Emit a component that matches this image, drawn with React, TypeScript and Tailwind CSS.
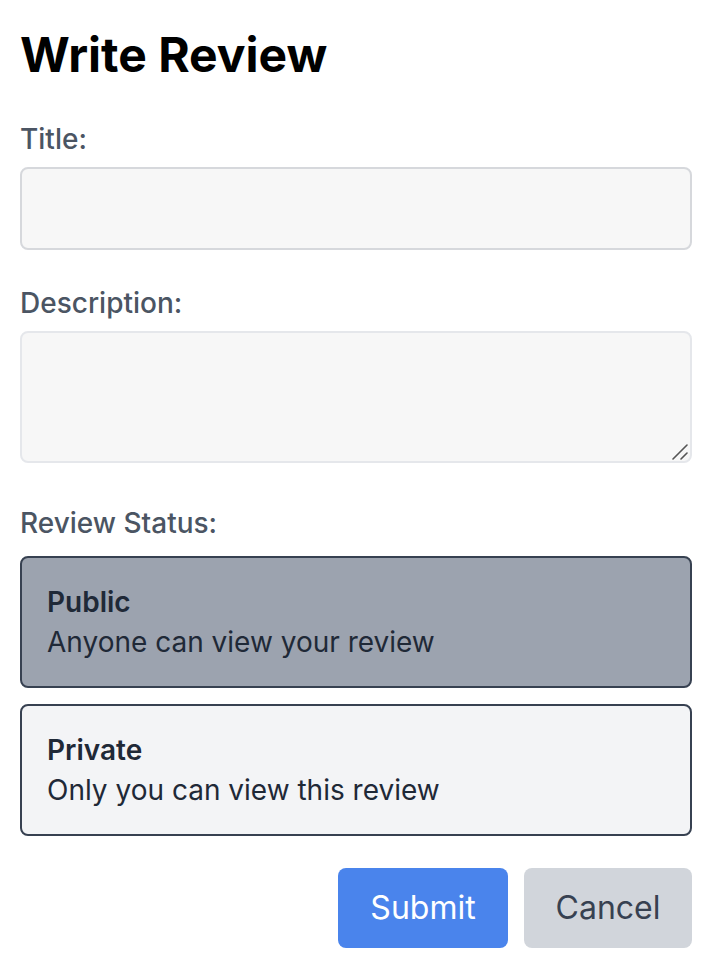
import { useState } from 'react'
import clsx from 'clsx'

const STATUS_OPTIONS = [
  { id: 'public', label: 'Public', hint: 'Anyone can view your review' },
  { id: 'private', label: 'Private', hint: 'Only you can view this review' },
]

export default function App() {
  const [status, setStatus] = useState('public')

  return (
    <div className="min-h-screen bg-white pl-[20px] pr-[24px] pt-[23px] font-['Inter',sans-serif]">
      <h1 className="text-[48px] leading-[64px] font-bold text-black">Write Review</h1>

      <form className="mt-[32px]" onSubmit={(e) => e.preventDefault()}>
        {/* Title */}
        <label className="block text-[28px] leading-[40px] font-medium text-[#4b5563] mb-[8px]">
          Title:
        </label>
        <input
          type="text"
          className="block w-full h-[83px] rounded-[8px] border-2 border-[#d6d8dc] bg-[#f7f7f7] px-[16px] text-[32px] outline-none"
        />

        {/* Description */}
        <label className="block mt-[33px] text-[28px] leading-[40px] font-medium text-[#4b5563] mb-[8px]">
          Description:
        </label>
        <div className="relative">
          <textarea className="block w-full h-[132px] resize-none rounded-[8px] border-2 border-[#e5e7eb] bg-[#f7f7f7] px-[16px] text-[32px] outline-none" />
          <svg
            className="pointer-events-none absolute right-[3px] bottom-[3px]"
            width="18"
            height="18"
            viewBox="0 0 18 18"
          >
            <path d="M2 17 L16 3 M10 17 L16 11" stroke="#555" strokeWidth="1.6" strokeLinecap="round" />
          </svg>
        </div>

        {/* Status */}
        <label className="block mt-[40px] text-[28px] leading-[40px] font-medium text-[#4b5563] mb-[13px]">
          Review Status:
        </label>
        <div className="flex flex-col gap-[16px]">
          {STATUS_OPTIONS.map((opt) => (
            <button
              key={opt.id}
              type="button"
              onClick={() => setStatus(opt.id)}
              className={clsx(
                'w-full text-left rounded-[8px] border-2 border-[#374151] px-[25px] py-[24px] text-[#1f2937]',
                status === opt.id ? 'bg-[#9ca3af]' : 'bg-[#f3f4f6]'
              )}
            >
              <p className="text-[28px] leading-[40px] font-semibold">{opt.label}</p>
              <p className="text-[28px] leading-[40px]">{opt.hint}</p>
            </button>
          ))}
        </div>

        {/* Actions */}
        <div className="mt-[32px] flex justify-end gap-[16px]">
          <button
            type="submit"
            className="h-[80px] w-[170px] rounded-[8px] bg-[#4a84ec] text-[32px] text-white"
          >
            Submit
          </button>
          <button
            type="button"
            className="h-[80px] w-[168px] rounded-[8px] bg-[#d1d5db] text-[32px] text-[#374151]"
          >
            Cancel
          </button>
        </div>
      </form>
    </div>
  )
}
